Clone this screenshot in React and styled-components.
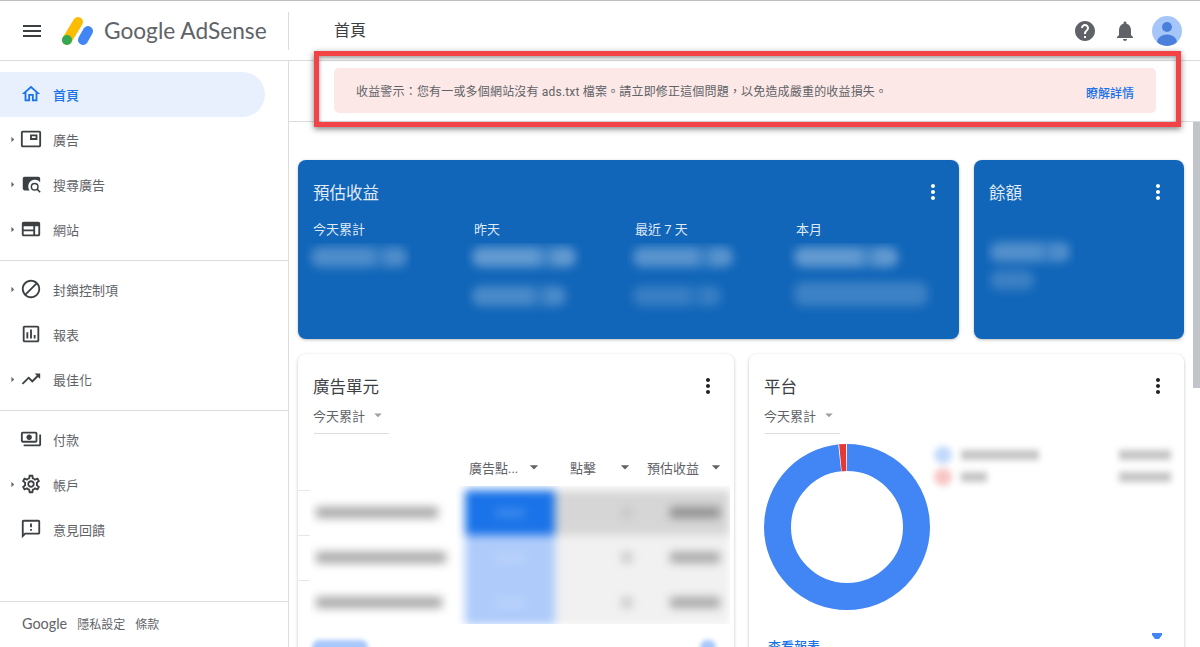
import styled, { createGlobalStyle } from "styled-components";
import {
  MdMenu,
  MdOutlineHome,
  MdOutlinePictureInPicture,
  MdOutlineWeb,
  MdBlock,
  MdOutlineAssessment,
  MdTrendingUp,
  MdOutlinePayments,
  MdOutlineSettings,
  MdOutlineFeedback,
  MdHelp,
  MdNotifications,
  MdMoreVert,
  MdArrowDropDown,
  MdArrowRight,
} from "react-icons/md";

const CJK = `"Roboto", "Noto Sans CJK TC", sans-serif`;

const GlobalStyle = createGlobalStyle`
  html, body {
    margin: 0;
    padding: 0;
    background: #fff;
    overflow: hidden;
  }
  * {
    box-sizing: border-box;
  }
`;

const Page = styled.div`
  position: relative;
  width: 1200px;
  height: 647px;
  display: flex;
  flex-direction: column;
  overflow: hidden;
  background: #fff;
  border-top: 1px solid #bdbdbd;
  font-family: ${CJK};
  color: #5f6368;
`;

const Header = styled.header`
  flex: none;
  height: 60px;
  display: flex;
  align-items: center;
  border-bottom: 1px solid #dadce0;
`;

const Brand = styled.div`
  width: 289px;
  height: 38px;
  display: flex;
  align-items: center;
  padding-left: 20px;
  border-right: 1px solid #dadce0;
  color: #3c4043;
`;

const BrandName = styled.span`
  margin-left: 10px;
  font-family: "Lato", "Open Sans", sans-serif;
  font-size: 22.7px;
  color: #5f6368;
  white-space: nowrap;
`;

const PageTitle = styled.h1`
  flex: 1;
  margin: 0;
  padding: 0 0 3px 45px;
  font-size: 16px;
  font-weight: 400;
  color: #3c4043;
`;

const HeaderIcons = styled.div`
  display: flex;
  align-items: center;
  gap: 16px;
  padding-right: 18px;
  color: #5f6368;
`;

const AvatarSlot = styled.span`
  display: flex;
  margin-left: -1px;
`;

const Body = styled.div`
  flex: 1;
  display: flex;
  min-height: 0;
`;

const Sidebar = styled.nav`
  flex: none;
  width: 289px;
  display: flex;
  flex-direction: column;
  border-right: 1px solid #dadce0;
`;

const NavGroup = styled.div`
  padding: ${(p) => (p.$first ? "11px" : "6px")} 0 8px;
  border-bottom: ${(p) => (p.$last ? "none" : "1px solid #dadce0")};
`;

const NavItem = styled.div`
  position: relative;
  width: 265px;
  height: 45px;
  display: flex;
  align-items: center;
  padding: 0 0 1px 53px;
  border-radius: 0 23px 23px 0;
  font-size: 13px;
  background: ${(p) => (p.$active ? "#e8f0fe" : "transparent")};
  color: ${(p) => (p.$active ? "#1a73e8" : "#5f6368")};
  font-weight: ${(p) => (p.$active ? 500 : 400)};
`;

const Caret = styled.span`
  position: absolute;
  left: 6px;
  top: 16px;
  display: flex;
  color: #5f6368;
`;

const NavIcon = styled.span`
  position: absolute;
  left: 20px;
  top: 11px;
  display: flex;
  color: ${(p) => (p.$active ? "#1a73e8" : "#3c4043")};
`;

const SideFooter = styled.div`
  margin-top: auto;
  height: 46px;
  display: flex;
  align-items: center;
  gap: 10px;
  padding: 0 0 2px 22px;
  border-top: 1px solid #dadce0;
  font-size: 12px;
`;

const FooterLogo = styled.span`
  font-family: "Lato", "Open Sans", sans-serif;
  font-size: 14.4px;
`;

const Main = styled.main`
  flex: 1;
  display: flex;
  flex-direction: column;
  min-width: 0;
`;

const AlertStrip = styled.div`
  flex: none;
  height: 61px;
  padding: 7px 44px 0 45px;
  border-bottom: 1px solid #dadce0;
`;

const Alert = styled.div`
  height: 45px;
  display: flex;
  align-items: center;
  justify-content: space-between;
  padding: 0 22px 0 23px;
  border-radius: 5px;
  background: #fce8e6;
  font-size: 12px;
  color: #5f6368;
`;

const AlertText = styled.span`
  margin-left: -1px;
  letter-spacing: 0.18px;
`;

const AlertLink = styled.a`
  margin-top: 3px;
  font-weight: 500;
  color: #1a73e8;
`;

const Annotation = styled.div`
  position: absolute;
  left: 314px;
  top: 50px;
  width: 867px;
  height: 76px;
  border: 5px solid #f44346;
  box-shadow: 0 2px 6px rgba(0, 0, 0, 0.5), inset 0 2px 4px rgba(0, 0, 0, 0.4);
  pointer-events: none;
`;

const ScrollArea = styled.div`
  flex: 1;
  display: flex;
  min-height: 0;
  overflow: hidden;
`;

const Content = styled.div`
  flex: 1;
  display: flex;
  flex-direction: column;
  gap: 15px;
  padding: 38px 9px 0;
`;

const ScrollRail = styled.div`
  flex: none;
  width: 7px;
`;

const ScrollThumb = styled.div`
  height: 266px;
  background: #c1c4c8;
`;

const Row = styled.div`
  display: grid;
  grid-template-columns: ${(p) => p.$cols};
  gap: 15px;
`;

const Card = styled.section`
  position: relative;
  height: ${(p) => p.$height}px;
  border-radius: 8px;
  overflow: hidden;
  background: ${(p) => (p.$blue ? "#1266b9" : "#fff")};
  color: ${(p) => (p.$blue ? "rgba(255,255,255,0.88)" : "#3c4043")};
  box-shadow: 0 1px 3px rgba(60, 64, 67, 0.35);
`;

const CardHead = styled.div`
  height: 22px;
  margin-top: 21px;
  padding: 0 16px 0 15px;
  display: flex;
  align-items: center;
  justify-content: space-between;
`;

const CardTitle = styled.h2`
  margin: 0;
  font-size: 16.5px;
  font-weight: 400;
`;

const MenuDots = styled.span`
  display: flex;
  margin-right: -2px;
  color: ${(p) => (p.$blue ? "#fff" : "#202124")};
`;

const StatRow = styled.div`
  display: grid;
  grid-template-columns: repeat(4, 161px);
  margin-top: 17px;
  padding-left: 15px;
`;

const StatLabel = styled.div`
  height: 20px;
  line-height: 20px;
  font-size: 13px;
`;

const Smudge = styled.div`
  width: ${(p) => p.$w}px;
  height: ${(p) => p.$h}px;
  margin: ${(p) => p.$margin || "0"};
  overflow: hidden;
`;

const SmudgeLine = styled.div`
  width: ${(p) => p.$w}px;
  height: ${(p) => p.$h || 20}px;
  margin: ${(p) => p.$margin || "0"};
  border-radius: 9px;
  background: ${(p) => p.$color || "rgba(255,255,255,0.3)"};
  filter: blur(5px);
`;

const Selector = styled.div`
  width: 75px;
  height: 29px;
  margin: 8px 0 0 16px;
  display: flex;
  align-items: flex-start;
  justify-content: space-between;
  padding-top: 1px;
  border-bottom: 1px solid #dadce0;
  font-size: 13px;
  color: #5f6368;
  white-space: nowrap;
`;

const SelectorText = styled.span`
  margin-left: -1px;
`;

const SelectorCaret = styled.span`
  display: flex;
  margin: 0 2px 0 0;
  color: #9aa0a6;
`;

const TableHead = styled.div`
  height: 20px;
  margin-top: 23px;
  padding-right: 8px;
  display: grid;
  grid-template-columns: 1fr 75px 91px 91px;
  align-items: center;
  font-size: 13px;
  color: #5f6368;
`;

const HeadCell = styled.div`
  display: flex;
  align-items: center;
  justify-content: space-between;
  padding-left: ${(p) => p.$indent || 0}px;
  white-space: nowrap;
`;

const TableArea = styled.div`
  height: 138px;
  margin-top: 9px;
  padding-left: 12px;
  background: repeating-linear-gradient(
      to bottom,
      #e6e6e6 0 1px,
      transparent 1px 45px
    )
    0 4px / 12px 100% no-repeat;
`;

const TableClip = styled.div`
  width: 420px;
  height: 138px;
  overflow: hidden;
  background: #fff;
`;

const TableBlur = styled.div`
  filter: blur(5px);
  padding-top: 4px;
`;

const TableRow = styled.div`
  height: 45px;
  display: grid;
  grid-template-columns: 155px 90px 175px;
`;

const NameCell = styled.div`
  display: flex;
  align-items: center;
  padding-left: 6px;
`;

const FakeText = styled.div`
  width: ${(p) => p.$w}px;
  height: ${(p) => p.$h || 11}px;
  background: ${(p) => p.$color || "#a6a6a6"};
`;

const CtrCell = styled.div`
  display: flex;
  align-items: center;
  justify-content: center;
  background: ${(p) => (p.$strong ? "#1a73e8" : "#aecbfa")};
`;

const NumberCells = styled.div`
  display: flex;
  align-items: center;
  justify-content: flex-end;
  gap: 38px;
  padding-right: 10px;
  background: ${(p) => (p.$strong ? "#d6d6d6" : "#f1f1f1")};
`;

const CardLinks = styled.div`
  display: flex;
  justify-content: space-between;
  align-items: center;
  margin-top: 16px;
  padding: 0 18px 0 14px;
`;

const LinkBlur = styled.div`
  width: ${(p) => p.$w}px;
  height: 14px;
  border-radius: 7px;
  background: #a8c7fa;
  filter: blur(2px);
`;

const PlatformBody = styled.div`
  display: flex;
  align-items: flex-start;
  padding-left: 14px;
`;

const DonutSlot = styled.div`
  display: flex;
  margin-top: 9px;
`;

const Legend = styled.div`
  width: 239px;
  height: 52px;
  margin: 3px 0 0 1px;
  overflow: hidden;
  filter: blur(3px);
`;

const LegendRow = styled.div`
  height: 22px;
  margin-top: ${(p) => (p.$first ? "7px" : "0")};
  display: flex;
  align-items: center;
`;

const LegendDot = styled.div`
  width: 18px;
  height: 18px;
  margin: 0 9px 0 2px;
  border-radius: 50%;
  background: ${(p) => p.$color};
`;

const LegendValue = styled.div`
  width: 52px;
  height: 10px;
  margin-left: auto;
  background: #c4c4c4;
`;

const ReportRow = styled.div`
  display: flex;
  justify-content: space-between;
  align-items: flex-start;
  margin-top: 25px;
  padding: 0 21px 0 19px;
  font-size: 13px;
  font-weight: 500;
  color: #1a73e8;
`;

const ReportMark = styled.svg`
  margin-top: -3px;
`;

const AdsenseLogo = () => (
  <svg width="34" height="34" viewBox="0 0 34 34" style={{ marginLeft: 16 }}>
    <line x1="7" y1="26" x2="18" y2="8" stroke="#fbbc04" strokeWidth="10" strokeLinecap="round" />
    <line x1="23" y1="26" x2="28" y2="17" stroke="#4285f4" strokeWidth="10" strokeLinecap="round" />
    <circle cx="7" cy="26" r="5" fill="#34a853" />
  </svg>
);

const SearchAdsIcon = () => (
  <svg width="22" height="22" viewBox="0 0 24 24" fill="#3c4043">
    <path d="M5 4h15a2 2 0 0 1 2 2v4.2a7 7 0 0 0-11.6 8.8H5a2 2 0 0 1-2-2V6a2 2 0 0 1 2-2z" />
    <circle cx="16" cy="15" r="3.6" fill="none" stroke="#3c4043" strokeWidth="1.6" />
    <line x1="18.6" y1="17.6" x2="22" y2="21" stroke="#3c4043" strokeWidth="1.8" />
  </svg>
);

const Avatar = () => (
  <svg width="30" height="30" viewBox="0 0 30 30">
    <defs>
      <clipPath id="avatar-clip">
        <circle cx="15" cy="15" r="15" />
      </clipPath>
    </defs>
    <circle cx="15" cy="15" r="15" fill="#a6c6fa" />
    <g clipPath="url(#avatar-clip)" fill="#4a80dc">
      <circle cx="15" cy="11" r="5" />
      <ellipse cx="15" cy="26" rx="10" ry="7.5" />
    </g>
  </svg>
);

// ring drawn as two arcs so the red slice sits just left of twelve o'clock
const Donut = () => (
  <svg width="168" height="168" viewBox="0 0 168 168">
    <circle cx="84" cy="84" r="69.5" fill="none" stroke="#4285f4" strokeWidth="27" />
    <path d="M84 14.5A69.5 69.5 0 0 0 76.7 14.9" fill="none" stroke="#fff" strokeWidth="27" />
    <path d="M83.2 14.5A69.5 69.5 0 0 0 77.4 14.8" fill="none" stroke="#e53935" strokeWidth="27" />
  </svg>
);

const navGroups = [
  [
    { label: "首頁", icon: <MdOutlineHome size={22} />, active: true },
    { label: "廣告", icon: <MdOutlinePictureInPicture size={22} />, caret: true },
    { label: "搜尋廣告", icon: <SearchAdsIcon />, caret: true },
    { label: "網站", icon: <MdOutlineWeb size={22} />, caret: true },
  ],
  [
    { label: "封鎖控制項", icon: <MdBlock size={22} />, caret: true },
    { label: "報表", icon: <MdOutlineAssessment size={22} /> },
    { label: "最佳化", icon: <MdTrendingUp size={22} />, caret: true },
  ],
  [
    { label: "付款", icon: <MdOutlinePayments size={22} /> },
    { label: "帳戶", icon: <MdOutlineSettings size={22} />, caret: true },
    { label: "意見回饋", icon: <MdOutlineFeedback size={22} /> },
  ],
];

const lump = (a, b) =>
  `linear-gradient(90deg, rgba(255,255,255,${a}) 0 62%, rgba(255,255,255,${b}) 70%, rgba(255,255,255,${a}) 82% 100%)`;

const stats = [
  { label: "今天累計", lines: [{ w: 96, margin: "4px 0 0 6px", color: lump(0.26, 0.12) }], clip: 106 },
  {
    label: "昨天",
    lines: [
      { w: 104, margin: "4px 0 0 6px", color: lump(0.34, 0.16) },
      { w: 94, margin: "19px 0 0 6px", color: lump(0.24, 0.1) },
    ],
    clip: 116,
  },
  {
    label: "最近 7 天",
    lines: [
      { w: 100, margin: "4px 0 0 6px", color: lump(0.3, 0.14) },
      { w: 88, margin: "19px 0 0 6px", color: lump(0.16, 0.08) },
    ],
    clip: 116,
  },
  {
    label: "本月",
    lines: [
      { w: 104, margin: "4px 0 0 6px", color: lump(0.34, 0.18) },
      { w: 134, $h: 24, margin: "15px 0 0 6px", color: "rgba(255,255,255,0.18)" },
    ],
    clip: 146,
  },
];

const adRows = [
  { name: 122, strong: true },
  { name: 130 },
  { name: 126 },
];

const App = () => {
  return (
    <Page>
      <GlobalStyle />
      <Header>
        <Brand>
          <MdMenu size={24} />
          <AdsenseLogo />
          <BrandName>Google AdSense</BrandName>
        </Brand>
        <PageTitle>首頁</PageTitle>
        <HeaderIcons>
          <MdHelp size={24} />
          <MdNotifications size={24} />
          <AvatarSlot>
            <Avatar />
          </AvatarSlot>
        </HeaderIcons>
      </Header>
      <Body>
        <Sidebar>
          {navGroups.map((items, i) => (
            <NavGroup key={i} $first={i === 0} $last={i === navGroups.length - 1}>
              {items.map((item) => (
                <NavItem key={item.label} $active={item.active}>
                  {item.caret && (
                    <Caret>
                      <MdArrowRight size={13} />
                    </Caret>
                  )}
                  <NavIcon $active={item.active}>{item.icon}</NavIcon>
                  {item.label}
                </NavItem>
              ))}
            </NavGroup>
          ))}
          <SideFooter>
            <FooterLogo>Google</FooterLogo>
            <span>隱私設定</span>
            <span>條款</span>
          </SideFooter>
        </Sidebar>
        <Main>
          <AlertStrip>
            <Alert>
              <AlertText>收益警示：您有一或多個網站沒有 ads.txt 檔案。請立即修正這個問題，以免造成嚴重的收益損失。</AlertText>
              <AlertLink>瞭解詳情</AlertLink>
            </Alert>
          </AlertStrip>
          <ScrollArea>
            <Content>
              <Row $cols="661px 210px">
                <Card $blue $height={179}>
                  <CardHead>
                    <CardTitle>預估收益</CardTitle>
                    <MenuDots $blue>
                      <MdMoreVert size={24} />
                    </MenuDots>
                  </CardHead>
                  <StatRow>
                    {stats.map((s) => (
                      <div key={s.label}>
                        <StatLabel>{s.label}</StatLabel>
                        <Smudge $w={s.clip} $h={76} $margin="3px 0 0 -8px">
                          {s.lines.map((l, i) => (
                            <SmudgeLine key={i} $w={l.w} $h={l.$h} $margin={l.margin} $color={l.color} />
                          ))}
                        </Smudge>
                      </div>
                    ))}
                  </StatRow>
                </Card>
                <Card $blue $height={179}>
                  <CardHead>
                    <CardTitle>餘額</CardTitle>
                    <MenuDots $blue>
                      <MdMoreVert size={24} />
                    </MenuDots>
                  </CardHead>
                  <Smudge $w={90} $h={66} $margin="31px 0 0 11px">
                    <SmudgeLine $w={80} $margin="8px 0 0 5px" $color={lump(0.27, 0.16)} />
                    <SmudgeLine $w={44} $margin="8px 0 0 5px" $color="rgba(255,255,255,0.17)" />
                  </Smudge>
                </Card>
              </Row>
              <Row $cols="436px 435px">
                <Card $height={330}>
                  <CardHead>
                    <CardTitle>廣告單元</CardTitle>
                    <MenuDots>
                      <MdMoreVert size={24} />
                    </MenuDots>
                  </CardHead>
                  <Selector>
                    <SelectorText>今天累計</SelectorText>
                    <SelectorCaret>
                      <MdArrowDropDown size={18} />
                    </SelectorCaret>
                  </Selector>
                  <TableHead>
                    <span />
                    <HeadCell>
                      廣告點...
                      <MdArrowDropDown size={20} color="#5f6368" />
                    </HeadCell>
                    <HeadCell $indent={26}>
                      點擊
                      <MdArrowDropDown size={20} color="#5f6368" />
                    </HeadCell>
                    <HeadCell $indent={12}>
                      預估收益
                      <MdArrowDropDown size={20} color="#5f6368" />
                    </HeadCell>
                  </TableHead>
                  <TableArea>
                    <TableClip>
                      <TableBlur>
                        {adRows.map((r) => (
                          <TableRow key={r.name}>
                            <NameCell>
                              <FakeText $w={r.name} />
                            </NameCell>
                            <CtrCell $strong={r.strong}>
                              <FakeText $w={30} $h={8} $color={r.strong ? "#3f8cee" : "#bcd4fb"} />
                            </CtrCell>
                            <NumberCells $strong={r.strong}>
                              <FakeText $w={10} $color="#c6c6c6" />
                              <FakeText $w={50} $color={r.strong ? "#8f8f8f" : "#a8a8a8"} />
                            </NumberCells>
                          </TableRow>
                        ))}
                      </TableBlur>
                    </TableClip>
                  </TableArea>
                  <CardLinks>
                    <LinkBlur $w={56} />
                    <LinkBlur $w={16} />
                  </CardLinks>
                </Card>
                <Card $height={330}>
                  <CardHead>
                    <CardTitle>平台</CardTitle>
                    <MenuDots>
                      <MdMoreVert size={24} />
                    </MenuDots>
                  </CardHead>
                  <Selector>
                    <SelectorText>今天累計</SelectorText>
                    <SelectorCaret>
                      <MdArrowDropDown size={18} />
                    </SelectorCaret>
                  </Selector>
                  <PlatformBody>
                    <DonutSlot>
                      <Donut />
                    </DonutSlot>
                    <Legend>
                      <LegendRow $first>
                        <LegendDot $color="#c3d9fc" />
                        <FakeText $w={78} $h={10} $color="#c4c4c4" />
                        <LegendValue />
                      </LegendRow>
                      <LegendRow>
                        <LegendDot $color="#f7c6c4" />
                        <FakeText $w={26} $h={10} $color="#c4c4c4" />
                        <LegendValue />
                      </LegendRow>
                    </Legend>
                  </PlatformBody>
                  <ReportRow>
                    <span>查看報表</span>
                    <ReportMark width="12" height="12" viewBox="0 0 12 12" fill="#4285f4">
                      <path d="M1 0h10v2L8 6H4L1 2z" />
                    </ReportMark>
                  </ReportRow>
                </Card>
              </Row>
            </Content>
            <ScrollRail>
              <ScrollThumb />
            </ScrollRail>
          </ScrollArea>
        </Main>
      </Body>
      <Annotation />
    </Page>
  );
};

export default App;
